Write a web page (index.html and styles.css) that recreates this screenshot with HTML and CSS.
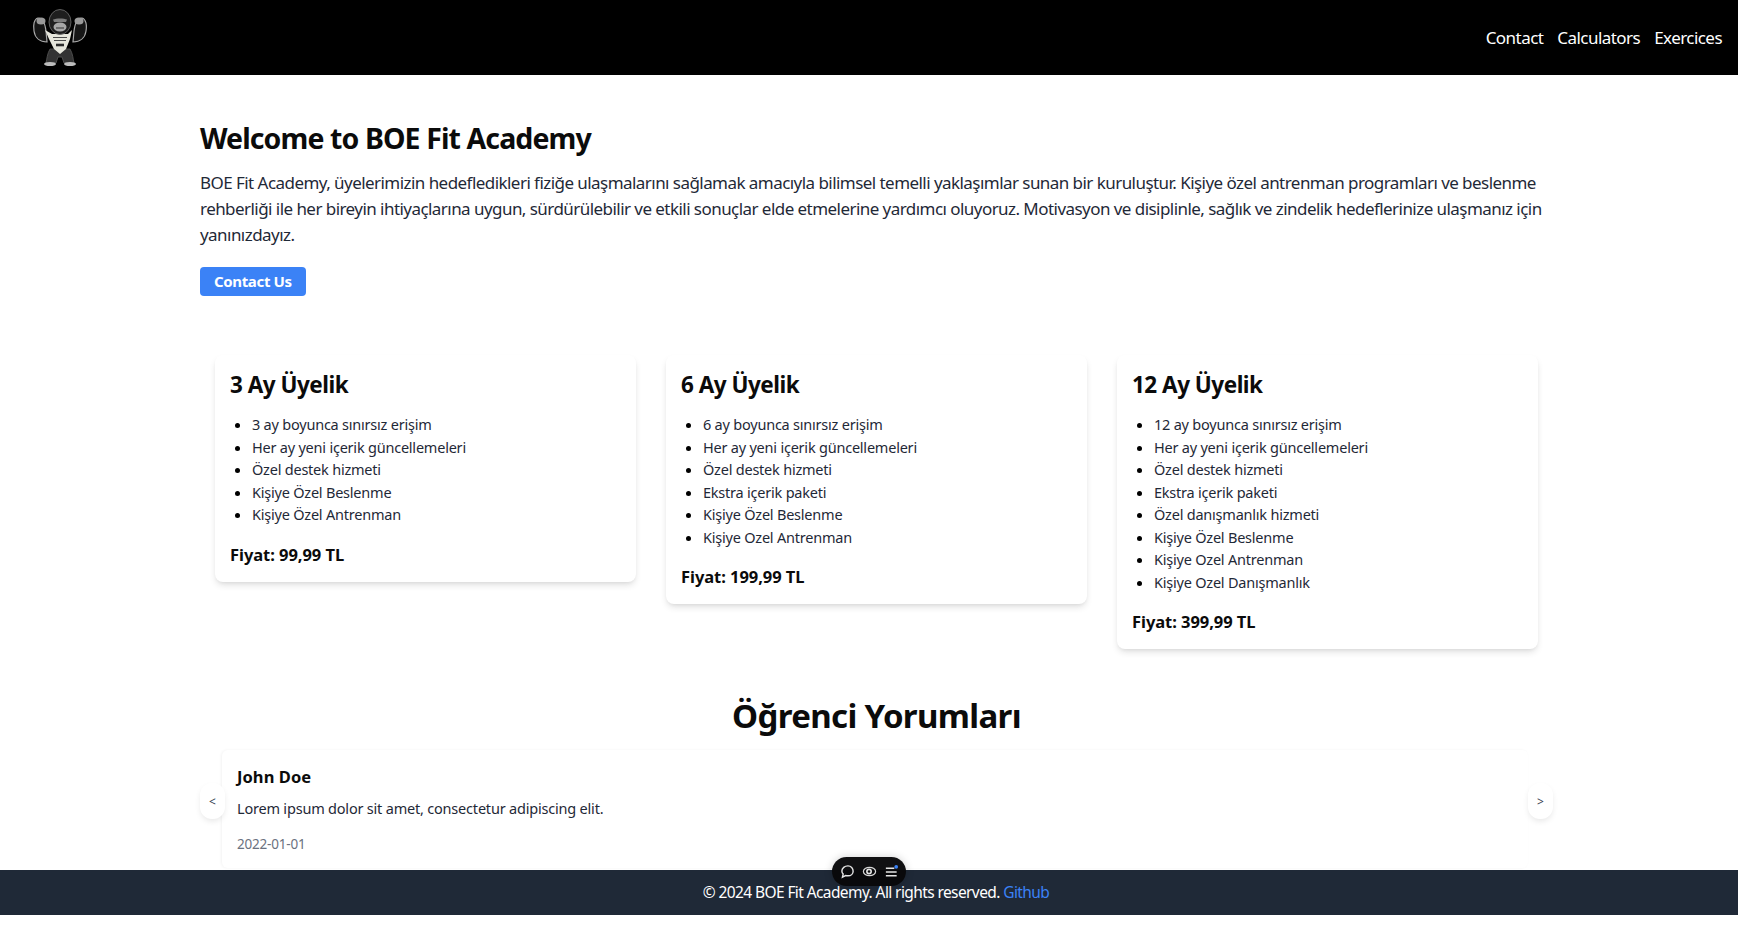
FILE: index.html
```html
<!DOCTYPE html>
<html lang="tr">
<head>
<meta charset="utf-8">
<title>BOE Fit Academy</title>
<link rel="stylesheet" href="styles.css">
</head>
<body>
<header class="nav">
  <svg class="logo" viewBox="31 7 56 60" aria-label="BOE Fit logo">
    <path d="M46 30C45 22 43 17 38 17C34 18 33 24 34 30C35 37 40 41 47 41Z" fill="#161616" stroke="#a8a8a8" stroke-width="1.2"/>
    <path d="M74 30C75 22 77 17 82 17C86 18 87 24 86 30C85 37 80 41 73 41Z" fill="#161616" stroke="#a8a8a8" stroke-width="1.2"/>
    <ellipse cx="41" cy="20" rx="4.500" ry="3.500" fill="#9a9a9a"/>
    <ellipse cx="79" cy="20" rx="4.500" ry="3.500" fill="#9a9a9a"/>
    <path d="M50 48C47 53 47 58 46 62L56 62L58 56L62 56L64 62L74 62C73 58 73 53 70 48Z" fill="#333" stroke="#555" stroke-width=".8"/>
    <path d="M45 29L52 33L68 33L72 29L70 38L66 48L60 53L54 48L49 38Z" fill="#e6e6dc"/>
    <path d="M53 36.500H67M54 39.500H66" stroke="#4a4a4a" stroke-width="1.100"/>
    <path d="M56 44H64" stroke="#2b2b2b" stroke-width="2.600"/>
    <ellipse cx="60" cy="21" rx="11" ry="12.500" fill="#1e1e1e" stroke="#666" stroke-width=".9"/>
    <path d="M53 18.500C56 17 64 17 67 18.500L66 21H54Z" fill="#7c7c7c"/>
    <ellipse cx="60" cy="26" rx="6.500" ry="4.500" fill="#a6a6a6"/>
    <path d="M56 27H64" stroke="#333" stroke-width="1"/>
    <ellipse cx="50" cy="63" rx="6" ry="2" fill="#bdbdbd"/>
    <ellipse cx="70" cy="63" rx="6" ry="2" fill="#bdbdbd"/>
  </svg>
  <nav class="nav-links">
    <a href="#">Contact</a>
    <a href="#">Calculators</a>
    <a href="#">Exercices</a>
  </nav>
</header>

<main class="main">
  <section class="hero">
    <h1>Welcome to BOE Fit Academy</h1>
    <p>BOE Fit Academy, üyelerimizin hedefledikleri fiziğe ulaşmalarını sağlamak amacıyla bilimsel temelli yaklaşımlar sunan bir kuruluştur. Kişiye özel antrenman programları ve beslenme rehberliği ile her bireyin ihtiyaçlarına uygun, sürdürülebilir ve etkili sonuçlar elde etmelerine yardımcı oluyoruz. Motivasyon ve disiplinle, sağlık ve zindelik hedeflerinize ulaşmanız için yanınızdayız.</p>
    <a class="btn" href="#">Contact Us</a>
  </section>

  <section class="plans">
    <article class="card">
      <h2>3 Ay Üyelik</h2>
      <ul>
        <li>3 ay boyunca sınırsız erişim</li>
        <li>Her ay yeni içerik güncellemeleri</li>
        <li>Özel destek hizmeti</li>
        <li>Kişiye Özel Beslenme</li>
        <li>Kişiye Özel Antrenman</li>
      </ul>
      <p class="price">Fiyat: 99,99 TL</p>
    </article>
    <article class="card">
      <h2>6 Ay Üyelik</h2>
      <ul>
        <li>6 ay boyunca sınırsız erişim</li>
        <li>Her ay yeni içerik güncellemeleri</li>
        <li>Özel destek hizmeti</li>
        <li>Ekstra içerik paketi</li>
        <li>Kişiye Özel Beslenme</li>
        <li>Kişiye Ozel Antrenman</li>
      </ul>
      <p class="price">Fiyat: 199,99 TL</p>
    </article>
    <article class="card">
      <h2>12 Ay Üyelik</h2>
      <ul>
        <li>12 ay boyunca sınırsız erişim</li>
        <li>Her ay yeni içerik güncellemeleri</li>
        <li>Özel destek hizmeti</li>
        <li>Ekstra içerik paketi</li>
        <li>Özel danışmanlık hizmeti</li>
        <li>Kişiye Özel Beslenme</li>
        <li>Kişiye Ozel Antrenman</li>
        <li>Kişiye Ozel Danışmanlık</li>
      </ul>
      <p class="price">Fiyat: 399,99 TL</p>
    </article>
  </section>

  <section class="reviews">
    <h2 class="reviews-title">Öğrenci Yorumları</h2>
    <div class="carousel">
      <button class="arrow" type="button">&lt;</button>
      <div class="review">
        <h3>John Doe</h3>
        <p class="review-text">Lorem ipsum dolor sit amet, consectetur adipiscing elit.</p>
        <p class="review-date">2022-01-01</p>
      </div>
      <button class="arrow" type="button">&gt;</button>
    </div>
  </section>
</main>

<footer class="footer">
  <span>© 2024 BOE Fit Academy. All rights reserved. <a href="#">Github</a></span>
  <div class="pill">
    <svg viewBox="0 0 16 16"><path d="M8.500 2C5 2 2 4.500 2 7.500c0 1.300.5 2.400 1.400 3.200L2.600 14l3.400-1.700c.8.2 1.600.3 2.500.3 3.300 0 5.500-2.200 5.500-5S11.800 2 8.500 2Z" fill="none" stroke="#e5e5e5" stroke-width="1.500"/></svg>
    <svg viewBox="0 0 16 16"><ellipse cx="8" cy="8" rx="6.500" ry="4.500" fill="none" stroke="#d8d8d8" stroke-width="1.300"/><circle cx="7.500" cy="8" r="2.300" fill="none" stroke="#e5e5e5" stroke-width="1.700"/></svg>
    <svg viewBox="0 0 16 16"><path d="M2 4.500h9M2 8.500h11.500M2 12.500h11.500" stroke="#e5e5e5" stroke-width="1.600"/><circle cx="13" cy="3" r="2" fill="#3b82f6"/></svg>
  </div>
</footer>
</body>
</html>
```
FILE: styles.css
```css
* { box-sizing: border-box; }
html, body { margin: 0; padding: 0; }
body {
  font-family: "Noto Sans", "Open Sans", "Liberation Sans", sans-serif;
  color: #111;
  background: #fff;
  font-size: 16px;
  line-height: 1.5;
}
.nav {
  height: 75px;
  background: #000;
  display: flex;
  align-items: center;
  justify-content: space-between;
  padding: 0 16px 0 31px;
}
.logo { width: 56px; height: 60px; }
.nav-links { display: flex; gap: 14px; }
.nav-links a { color: #fff; text-decoration: none; font-size: 17px; letter-spacing: -0.55px; }
.main { padding: 0 185px 0 200px; }
.hero { padding-top: 43px; }
.hero h1 { margin: 0; font-size: 28.5px; line-height: 40px; font-weight: 700; letter-spacing: -0.9px; color: #0b0b0b; }
.hero p { margin: 12px 0 0; font-size: 17px; line-height: 26px; letter-spacing: -0.55px; color: #1f2937; }
.btn {
  display: inline-block;
  margin-top: 19px;
  height: 29px;
  line-height: 29px;
  padding: 0 14px;
  background: #3b82f6;
  color: #fff;
  font-size: 15px;
  font-weight: 700;
  letter-spacing: -0.35px;
  border-radius: 4px;
  text-decoration: none;
}
.plans {
  display: grid;
  grid-template-columns: repeat(3, 421px);
  gap: 30px;
  justify-content: center;
  align-items: start;
  margin-top: 59px;
}
.card {
  background: #fff;
  border-radius: 8px;
  box-shadow: 0 4px 7px -1px rgba(0,0,0,.12), 0 2px 4px -2px rgba(0,0,0,.08);
  padding: 15px 15px 14px;
}
.card h2 { margin: 0; font-size: 22.5px; line-height: 30px; font-weight: 700; letter-spacing: -0.5px; color: #0b0b0b; }
.card ul { margin: 13px 0 0; padding: 0 0 0 22px; list-style: disc; }
.card li { font-size: 14.5px; line-height: 22.5px; letter-spacing: -0.22px; color: #1f2937; }
.card li::marker { color: #000; }
.price { margin: 16px 0 0; font-size: 16.5px; line-height: 26px; font-weight: 700; letter-spacing: -0.05px; color: #0b0b0b; }
.reviews { margin-top: 45px; }
.reviews-title { margin: 0; text-align: center; font-size: 33px; line-height: 44px; font-weight: 700; letter-spacing: -0.65px; color: #0b0b0b; }
.carousel { display: flex; align-items: flex-start; margin-top: 12px; height: 120px; }
.arrow {
  position: relative;
  z-index: 1;
  width: 25px;
  height: 36px;
  margin-top: 33px;
  border: 0;
  border-radius: 12px;
  background: #fff;
  box-shadow: 0 3px 6px -1px rgba(0,0,0,.1);
  font: 12px "Noto Sans", sans-serif;
  color: #374151;
  padding: 0;
  flex: none;
}
.review {
  flex: 1;
  height: 118px;
  margin-left: -3px;
  padding: 14px 15px 15px;
  border-radius: 6px;
  box-shadow: -1px 0 3px rgba(0,0,0,.05);
}
.review h3 { margin: 0; font-size: 16.5px; line-height: 26px; font-weight: 700; letter-spacing: 0.05px; color: #0b0b0b; }
.review-text { margin: 7px 0 0; font-size: 14.5px; line-height: 22px; letter-spacing: -0.2px; color: #1f2937; }
.review-date { margin: 15px 0 0; font-size: 13.5px; line-height: 20px; letter-spacing: -0.2px; color: #6b7280; }
.footer {
  position: relative;
  height: 45px;
  padding-left: 14px;
  background: #1f2937;
  color: #fff;
  display: flex;
  align-items: center;
  justify-content: center;
  font-size: 15.5px;
  letter-spacing: -0.6px;
}
.footer a { color: #3b82f6; text-decoration: none; }
.pill {
  position: absolute;
  left: 832px;
  top: -13px;
  width: 74px;
  height: 29px;
  background: rgba(8,8,10,.97);
  border-radius: 15px;
  display: flex;
  align-items: center;
  justify-content: center;
  gap: 7px;
  box-shadow: 0 0 8px rgba(0,0,0,.18);
}
.pill svg { width: 15px; height: 15px; }
```
